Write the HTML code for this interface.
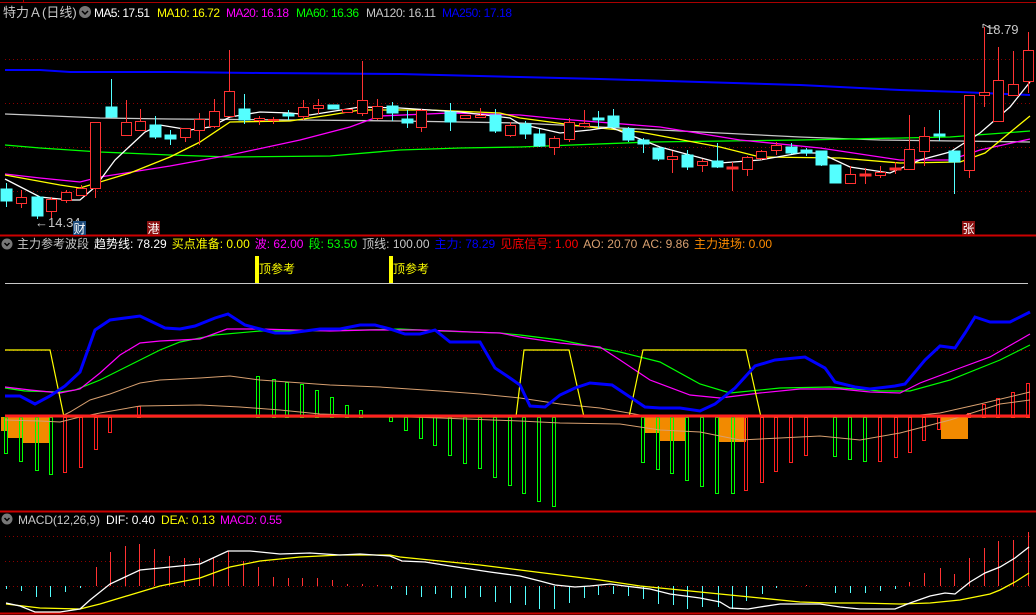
<!DOCTYPE html>
<html><head><meta charset="utf-8"><style>
html,body{margin:0;padding:0;background:#000;width:1036px;height:615px;overflow:hidden}
svg{display:block}
text{font-family:"Liberation Sans","Noto Sans CJK SC",sans-serif;font-size:12px}
.h{font-size:13px}
</style></head><body>
<svg width="1036" height="615" viewBox="0 0 1036 615" xmlns="http://www.w3.org/2000/svg">
<rect width="1036" height="615" fill="#000"/>
<line x1="0" y1="2.5" x2="1036" y2="2.5" stroke="#a00" stroke-width="1"/>
<line x1="23.5" y1="0" x2="23.5" y2="3" stroke="#a00"/>
<line x1="0" y1="235.5" x2="1036" y2="235.5" stroke="#c00" stroke-width="2"/>
<line x1="0" y1="511.5" x2="1036" y2="511.5" stroke="#c00" stroke-width="2"/>
<line x1="0" y1="613.5" x2="1036" y2="613.5" stroke="#c00" stroke-width="2"/>
<g stroke="#8a0000" stroke-dasharray="1,3">
<line x1="5" y1="59.5" x2="1030" y2="59.5"/><line x1="5" y1="103.5" x2="1030" y2="103.5"/>
<line x1="5" y1="147.5" x2="1030" y2="147.5"/><line x1="5" y1="191.5" x2="1030" y2="191.5"/>
<line x1="5" y1="350.5" x2="1030" y2="350.5"/>
<line x1="5" y1="536.5" x2="1030" y2="536.5"/><line x1="5" y1="561.5" x2="1030" y2="561.5"/><line x1="5" y1="586.5" x2="1030" y2="586.5"/>
</g>
<text class="h" x="3" y="17" fill="#c8c8c8">特力Ａ(日线)</text>
<circle cx="85" cy="12" r="6" fill="#777"/><path d="M82 11 L85 14 L88 11" stroke="#000" stroke-width="1.5" fill="none"/>
<text x="94" y="17" fill="#fff" textLength="56">MA5: 17.51</text>
<text x="157" y="17" fill="#ff0" textLength="63">MA10: 16.72</text>
<text x="226" y="17" fill="#f0f" textLength="63">MA20: 16.18</text>
<text x="296" y="17" fill="#0f0" textLength="63">MA60: 16.36</text>
<text x="366" y="17" fill="#c8c8c8" textLength="70">MA120: 16.11</text>
<text x="442" y="17" fill="#00f" textLength="70">MA250: 17.18</text>
<g fill="none" stroke-width="1.3">
<polyline stroke="#0000ff" stroke-width="2" points="5,70 40,70 70,72 170,72 260,73 400,74 520,77 600,79 700,82 800,85 900,90 960,92 1030,95"/>
<polyline stroke="#c8c8c8" points="5,114 30,115 100,118 170,119 300,120 400,121 520,123 600,127 720,133 800,137 880,140 1030,142"/>
<polyline stroke="#00ff00" points="5,145 40,148 100,152 170,155 230,157 330,156 400,150 460,148 520,147 650,142 800,140 950,137 1030,131"/>
<polyline stroke="#ff00ff" points="5,174 40,178 80,182 100,177 170,166 230,155 300,140 350,127 380,116 450,113 520,115 560,119 660,127 740,140 820,148 900,160 950,160 980,150 1030,139"/>
<polyline stroke="#ffff00" points="5,175 60,185 80,188 130,173 170,157 200,142 230,122 290,121 330,115 360,110 430,110 500,113 520,118 580,126 640,132 720,147 760,157 840,158 900,163 960,162 985,153 1030,116"/>
<polyline stroke="#ffffff" points="5,179 40,197 70,200 80,200 95,187 115,160 145,132 160,125 190,130 210,127 230,117 260,112 290,113 310,115 360,107 400,108 460,112 510,118 520,124 560,133 590,130 610,127 660,147 720,163 760,160 800,153 820,153 850,167 890,173 920,160 950,152 980,133 1010,107 1030,82"/>
</g>
<g stroke-width="1">
<g stroke="#54ffff" fill="#54ffff">
<line x1="6.5" y1="183" x2="6.5" y2="207"/><rect x="1" y="189" width="11" height="12"/>
<line x1="37.5" y1="196" x2="37.5" y2="219"/><rect x="32" y="197" width="11" height="19"/>
<line x1="111.5" y1="79" x2="111.5" y2="118"/><rect x="106" y="107" width="11" height="10"/>
<line x1="155.5" y1="116" x2="155.5" y2="139"/><rect x="150" y="125" width="11" height="12"/>
<line x1="170.5" y1="130" x2="170.5" y2="145"/><rect x="165" y="135" width="11" height="4"/>
<line x1="244.5" y1="94" x2="244.5" y2="124"/><rect x="239" y="109" width="11" height="11"/>
<line x1="288.5" y1="110" x2="288.5" y2="120"/><rect x="283" y="114" width="11" height="2"/>
<rect x="328" y="105" width="11" height="4"/>
<line x1="392.5" y1="102" x2="392.5" y2="121"/><rect x="387" y="106" width="11" height="7"/>
<line x1="407.5" y1="110" x2="407.5" y2="128"/><rect x="402" y="119" width="11" height="4"/>
<line x1="450.5" y1="103" x2="450.5" y2="131"/><rect x="445" y="112" width="11" height="10"/>
<line x1="495.5" y1="109" x2="495.5" y2="133"/><rect x="490" y="115" width="11" height="16"/>
<line x1="525.5" y1="121" x2="525.5" y2="139"/><rect x="520" y="124" width="11" height="10"/>
<line x1="539.5" y1="129" x2="539.5" y2="147"/><rect x="534" y="134" width="11" height="12"/>
<line x1="598.5" y1="111" x2="598.5" y2="128"/><rect x="593" y="118" width="11" height="2"/>
<line x1="613.5" y1="109" x2="613.5" y2="128"/><rect x="608" y="116" width="11" height="11"/>
<line x1="628.5" y1="127" x2="628.5" y2="142"/><rect x="623" y="129" width="11" height="11"/>
<line x1="643.5" y1="138" x2="643.5" y2="153"/><rect x="638" y="140" width="11" height="4"/>
<line x1="658.5" y1="148" x2="658.5" y2="161"/><rect x="653" y="148" width="11" height="11"/>
<line x1="687.5" y1="150" x2="687.5" y2="170"/><rect x="682" y="155" width="11" height="12"/>
<line x1="717.5" y1="143" x2="717.5" y2="168"/><rect x="712" y="161" width="11" height="6"/>
<line x1="791.5" y1="143" x2="791.5" y2="154"/><rect x="786" y="147" width="11" height="6"/>
<line x1="806.5" y1="148" x2="806.5" y2="156"/><rect x="801" y="150" width="11" height="3"/>
<line x1="821.5" y1="151" x2="821.5" y2="166"/><rect x="816" y="151" width="11" height="14"/>
<rect x="830" y="165" width="11" height="18"/>
<line x1="939.5" y1="110" x2="939.5" y2="141"/><rect x="934" y="134" width="11" height="2"/>
<line x1="954.5" y1="151" x2="954.5" y2="194"/><rect x="949" y="151" width="11" height="11"/>
</g>
<g stroke="#ff3232" fill="#000">
<line x1="21.5" y1="190" x2="21.5" y2="208"/><rect x="16.5" y="197.5" width="10" height="6"/>
<line x1="51.5" y1="197" x2="51.5" y2="218"/><rect x="46.5" y="199.5" width="10" height="12"/>
<line x1="66.5" y1="190" x2="66.5" y2="203"/><rect x="61.5" y="192.5" width="10" height="8"/>
<line x1="81.5" y1="185" x2="81.5" y2="195"/><rect x="76.5" y="188.5" width="10" height="7"/>
<line x1="95.5" y1="122" x2="95.5" y2="198"/><rect x="90.5" y="122.5" width="10" height="66"/>
<line x1="126.5" y1="100" x2="126.5" y2="135"/><rect x="121.5" y="122.5" width="10" height="13"/>
<line x1="140.5" y1="109" x2="140.5" y2="130"/><rect x="135.5" y="121.5" width="10" height="9"/>
<line x1="185.5" y1="128" x2="185.5" y2="142"/><rect x="180.5" y="128.5" width="10" height="9"/>
<line x1="199.5" y1="113" x2="199.5" y2="145"/><rect x="194.5" y="119.5" width="10" height="11"/>
<line x1="214.5" y1="99" x2="214.5" y2="128"/><rect x="209.5" y="111.5" width="10" height="15"/>
<line x1="229.5" y1="50" x2="229.5" y2="116"/><rect x="224.5" y="91.5" width="10" height="25"/>
<line x1="259.5" y1="116" x2="259.5" y2="125"/><rect x="254.5" y="118.5" width="10" height="2"/>
<line x1="273.5" y1="117" x2="273.5" y2="124"/><rect x="268.5" y="119.5" width="10" height="1"/>
<line x1="303.5" y1="100" x2="303.5" y2="120"/><rect x="298.5" y="107.5" width="10" height="9"/>
<line x1="318.5" y1="99" x2="318.5" y2="114"/><rect x="313.5" y="105.5" width="10" height="3"/>
<rect x="342.5" y="109.5" width="10" height="3"/>
<line x1="362.5" y1="61" x2="362.5" y2="116"/><rect x="357.5" y="100.5" width="10" height="13"/>
<line x1="377.5" y1="99" x2="377.5" y2="120"/><rect x="372.5" y="106.5" width="10" height="12"/>
<line x1="421.5" y1="109" x2="421.5" y2="132"/><rect x="416.5" y="110.5" width="10" height="17"/>
<rect x="460.5" y="115.5" width="10" height="3"/>
<line x1="480.5" y1="108" x2="480.5" y2="118"/><rect x="475.5" y="115.5" width="10" height="2"/>
<line x1="510.5" y1="122" x2="510.5" y2="137"/><rect x="505.5" y="125.5" width="10" height="10"/>
<line x1="554.5" y1="136" x2="554.5" y2="155"/><rect x="549.5" y="138.5" width="10" height="9"/>
<line x1="569.5" y1="118" x2="569.5" y2="142"/><rect x="564.5" y="122.5" width="10" height="17"/>
<line x1="584.5" y1="110" x2="584.5" y2="128"/><rect x="579.5" y="123.5" width="10" height="3"/>
<line x1="672.5" y1="151" x2="672.5" y2="173"/><rect x="667.5" y="156.5" width="10" height="3"/>
<line x1="702.5" y1="159" x2="702.5" y2="172"/><rect x="697.5" y="161.5" width="10" height="4"/>
<line x1="747.5" y1="156" x2="747.5" y2="176"/><rect x="742.5" y="157.5" width="10" height="12"/>
<line x1="761.5" y1="150" x2="761.5" y2="160"/><rect x="756.5" y="151.5" width="10" height="7"/>
<line x1="776.5" y1="142" x2="776.5" y2="155"/><rect x="771.5" y="145.5" width="10" height="5"/>
<line x1="850.5" y1="166" x2="850.5" y2="184"/><rect x="845.5" y="174.5" width="10" height="9"/>
<line x1="880.5" y1="166" x2="880.5" y2="178"/><rect x="875.5" y="172.5" width="10" height="3"/>
<line x1="909.5" y1="115" x2="909.5" y2="165"/><rect x="904.5" y="149.5" width="10" height="20"/>
<line x1="924.5" y1="127" x2="924.5" y2="166"/><rect x="919.5" y="136.5" width="10" height="15"/>
<line x1="969.5" y1="95" x2="969.5" y2="178"/><rect x="964.5" y="95.5" width="10" height="75"/>
<line x1="984.5" y1="27" x2="984.5" y2="107"/><rect x="979.5" y="92.5" width="10" height="3"/>
<line x1="998.5" y1="47" x2="998.5" y2="121"/><rect x="993.5" y="80.5" width="10" height="41"/>
<line x1="1013.5" y1="51" x2="1013.5" y2="95"/><rect x="1008.5" y="84.5" width="10" height="11"/>
<line x1="1028.5" y1="32" x2="1028.5" y2="93"/><rect x="1023.5" y="50.5" width="10" height="31"/>
</g>
<g stroke="#ff3232" fill="#ff3232">
<line x1="732.5" y1="162" x2="732.5" y2="191"/><rect x="727" y="167" width="11" height="2"/>
<line x1="865.5" y1="168" x2="865.5" y2="184"/><rect x="860" y="174" width="11" height="2"/>
<line x1="895.5" y1="162" x2="895.5" y2="174"/><rect x="890" y="168" width="11" height="2"/>
</g>
</g>
<text class="h" x="35" y="227" fill="#c8c8c8">←14.34</text>
<text class="h" x="986" y="34" fill="#c8c8c8">18.79</text>
<path d="M983 24 L983 28 M983 24 L990 28 L996 28" stroke="#c8c8c8" fill="none"/>
<rect x="73" y="221" width="13" height="14" fill="#1c4a7a"/><text x="73.5" y="233" fill="#fff">财</text>
<rect x="147" y="221" width="13" height="14" fill="#8a1010"/><text x="147.5" y="233" fill="#fff">港</text>
<rect x="962" y="221" width="13" height="14" fill="#8a1010"/><text x="962.5" y="233" fill="#fff">张</text>
<circle cx="7" cy="244" r="5.5" fill="#777"/><path d="M4.5 243 L7 245.5 L9.5 243" stroke="#000" stroke-width="1.5" fill="none"/>
<text y="248" x="17"><tspan fill="#c8c8c8">主力参考波段</tspan><tspan fill="#fff" dx="5">趋势线: 78.29</tspan><tspan fill="#ff0" dx="5">买点准备: 0.00</tspan><tspan fill="#f0f" dx="5">波: 62.00</tspan><tspan fill="#0f0" dx="5">段: 53.50</tspan><tspan fill="#c8c8c8" dx="5">顶线: 100.00</tspan><tspan fill="#00f" dx="5">主力: 78.29</tspan><tspan fill="#f00" dx="5">见底信号: 1.00</tspan><tspan fill="#d8a070" dx="5">AO: 20.70</tspan><tspan fill="#d8a070" dx="5">AC: 9.86</tspan><tspan fill="#ff8c00" dx="5">主力进场: 0.00</tspan></text>
<rect x="255" y="256" width="4" height="27" fill="#ff0"/><text x="259" y="273" fill="#ff0">顶参考</text>
<rect x="389" y="256" width="4" height="27" fill="#ff0"/><text x="393" y="273" fill="#ff0">顶参考</text>
<line x1="5" y1="283.5" x2="1028" y2="283.5" stroke="#c8c8c8"/>
<g fill="#f28a00">
<rect x="1" y="417" width="49" height="14"/><rect x="8" y="417" width="42" height="21"/><rect x="23" y="417" width="27" height="26"/>
<rect x="645" y="417" width="41" height="16"/><rect x="659" y="417" width="27" height="24"/>
<rect x="719" y="417" width="27" height="25"/><rect x="941" y="417" width="27" height="22"/>
</g>
<g fill="none" stroke-width="1">
<g stroke="#00ff00">
<rect x="4.5" y="417.5" width="3" height="36"/><rect x="19.5" y="417.5" width="3" height="44"/><rect x="35.5" y="417.5" width="3" height="53"/><rect x="49.5" y="417.5" width="3" height="57"/>
<rect x="256.5" y="376.5" width="3" height="41"/><rect x="272.5" y="379.5" width="3" height="38"/><rect x="285.5" y="382.5" width="3" height="35"/><rect x="300.5" y="384.5" width="3" height="33"/><rect x="315.5" y="390.5" width="3" height="27"/><rect x="330.5" y="397.5" width="3" height="20"/><rect x="345.5" y="405.5" width="3" height="12"/><rect x="359.5" y="410.5" width="3" height="7"/>
<rect x="389.5" y="417.5" width="3" height="4"/><rect x="404.5" y="417.5" width="3" height="13"/><rect x="419.5" y="417.5" width="3" height="21"/><rect x="433.5" y="417.5" width="3" height="28"/><rect x="448.5" y="417.5" width="3" height="38"/><rect x="463.5" y="417.5" width="3" height="46"/><rect x="478.5" y="417.5" width="3" height="51"/><rect x="493.5" y="417.5" width="3" height="60"/><rect x="508.5" y="417.5" width="3" height="68"/><rect x="522.5" y="417.5" width="3" height="76"/><rect x="537.5" y="417.5" width="3" height="84"/><rect x="552.5" y="417.5" width="3" height="89"/>
<rect x="641.5" y="417.5" width="3" height="45"/><rect x="656.5" y="417.5" width="3" height="52"/><rect x="670.5" y="417.5" width="3" height="56"/><rect x="685.5" y="417.5" width="3" height="63"/><rect x="700.5" y="417.5" width="3" height="69"/><rect x="715.5" y="417.5" width="3" height="76"/><rect x="731.5" y="417.5" width="3" height="76"/>
<rect x="833.5" y="417.5" width="3" height="39"/><rect x="848.5" y="417.5" width="3" height="42"/><rect x="863.5" y="417.5" width="3" height="44"/>
</g>
<g stroke="#ff2020">
<rect x="63.5" y="417.5" width="3" height="55"/><rect x="79.5" y="417.5" width="3" height="50"/><rect x="94.5" y="417.5" width="3" height="32"/><rect x="108.5" y="417.5" width="3" height="15"/>
<rect x="137.5" y="406.5" width="3" height="11"/>
<rect x="744.5" y="417.5" width="3" height="73"/><rect x="760.5" y="417.5" width="3" height="65"/><rect x="774.5" y="417.5" width="3" height="54"/><rect x="789.5" y="417.5" width="3" height="45"/><rect x="804.5" y="417.5" width="3" height="38"/>
<rect x="878.5" y="417.5" width="3" height="44"/><rect x="894.5" y="417.5" width="3" height="40"/><rect x="908.5" y="417.5" width="3" height="35"/><rect x="922.5" y="417.5" width="3" height="23"/><rect x="937.5" y="417.5" width="3" height="12"/>
<rect x="967.5" y="413.5" width="3" height="4"/><rect x="982.5" y="404.5" width="3" height="13"/><rect x="996.5" y="398.5" width="3" height="19"/><rect x="1011.5" y="392.5" width="3" height="25"/><rect x="1026.5" y="383.5" width="3" height="34"/>
</g>
</g>
<g fill="none">
<polyline stroke="#d8a070" points="5,417 60,417 70,412 90,400 110,394 140,383 160,380 200,378 230,376 260,380 330,385 380,387 440,391 480,394 520,398 560,404 600,408 640,415 700,417 760,417 820,417 900,417 940,413 980,404 1030,392"/>
<polyline stroke="#d8a070" points="5,420 40,421 60,422 80,417 100,413 140,406 200,405 240,407 280,410 320,414 380,416 440,418 520,421 560,423 620,424 660,430 700,432 740,440 780,438 820,436 860,440 900,433 950,420 1000,404 1030,400"/>
<polyline stroke="#00ff00" stroke-width="1.2" points="5,388 25,391 60,392 75,390 100,380 130,365 160,350 180,342 215,335 260,331 300,331 360,330 400,329 440,331 500,333 520,335 560,340 620,352 660,362 700,384 730,393 780,388 830,387 880,391 910,391 950,380 1000,360 1030,345"/>
<polyline stroke="#ff00ff" stroke-width="1.2" points="5,387 30,390 60,393 80,389 100,373 120,355 140,343 160,341 200,339 227,329 260,329 330,331 370,330 420,330 450,331 470,332 500,333 520,337 560,343 600,347 620,360 650,380 690,395 720,398 760,393 800,389 840,389 870,392 900,393 920,383 960,368 990,357 1030,334"/>
<polyline stroke="#ffff00" stroke-width="1.2" points="5,350 50,350 64,417 516,417 524,350 569,350 584,417 629,417 643,350 746,350 761,417 1030,417"/>
<polyline stroke="#0000ff" stroke-width="3" points="5,396 20,396 35,404 50,396 65,386 80,372 95,330 110,320 125,318 140,316 165,328 180,329 195,326 215,318 228,314 245,325 260,329 275,333 290,333 305,331 320,329 340,329 360,325 375,325 390,329 405,334 420,334 435,330 450,342 465,342 480,342 495,368 510,378 520,385 530,406 545,407 560,395 575,388 590,383 612,385 630,397 645,407 660,408 680,408 700,411 715,404 735,388 755,366 775,360 805,357 825,368 835,382 855,387 870,389 895,386 905,384 925,360 940,346 955,348 965,333 975,317 990,322 1010,322 1030,312"/>
</g>
<line x1="5" y1="416" x2="1030" y2="416" stroke="#ff2020" stroke-width="3"/>
<circle cx="7" cy="519" r="5.5" fill="#777"/><path d="M4.5 518 L7 520.5 L9.5 518" stroke="#000" stroke-width="1.5" fill="none"/>
<text x="18" y="524" fill="#c8c8c8" textLength="82">MACD(12,26,9)</text>
<text x="106" y="524" fill="#fff" textLength="49">DIF: 0.40</text>
<text x="161" y="524" fill="#ff0" textLength="54">DEA: 0.13</text>
<text x="220" y="524" fill="#f0f" textLength="62">MACD: 0.55</text>
<g stroke-width="1">
<g stroke="#54ffff">
<path d="M6.5 586V589M21.5 586V591M36.5 586V597M50.5 586V597M65.5 586V592M80.5 586V588M391.5 586V589M406.5 586V595M421.5 586V597M435.5 586V594M451.5 586V598M465.5 586V598M480.5 586V597M495.5 586V602M510.5 586V603M525.5 586V605M539.5 586V609M554.5 586V609M569.5 586V603M584.5 586V598M598.5 586V595M613.5 586V594M628.5 586V596M643.5 586V599M658.5 586V604M673.5 586V605M687.5 586V609M702.5 586V607M718.5 586V607M732.5 586V609M746.5 586V601M762.5 586V594M776.5 586V588M835.5 586V593M850.5 586V593M865.5 586V593M880.5 586V591M895.5 586V589"/>
</g>
<g stroke="#ff3232">
<path d="M96.5 586V567M110.5 586V552M125.5 586V546M139.5 586V544M154.5 586V549M169.5 586V556M184.5 586V558M199.5 586V558M213.5 586V558M228.5 586V551M243.5 586V561M258.5 586V567M273.5 586V577M288.5 586V578M302.5 586V578M317.5 586V578M332.5 586V580M347.5 586V584M362.5 586V584M377.5 586V585M806.5 586V585M909.5 586V582M924.5 586V573M940.5 586V568M954.5 586V574M969.5 586V558M984.5 586V548M998.5 586V541M1013.5 586V540M1028.5 586V532"/>
</g>
</g>
<g fill="none" stroke-width="1.3">
<polyline stroke="#ffff00" points="6,604 40,608 80,609 100,604 130,595 160,586 200,578 230,567 260,561 300,557 340,555 390,555 400,557 440,561 480,565 520,570 560,575 600,580 640,586 680,590 720,594 760,598 800,602 830,603 860,603 900,604 930,603 960,600 990,594 1000,590 1015,582 1029,573"/>
<polyline stroke="#ffffff" points="6,603 20,606 35,612 60,612 80,609 90,600 110,584 140,570 160,568 180,566 200,564 228,551 250,551 280,554 310,553 340,555 360,554 390,556 402,561 425,562 450,566 490,572 520,576 540,581 555,585 575,587 590,586 610,584 625,586 650,589 670,594 700,598 720,602 730,608 748,609 760,607 780,604 820,604 840,607 860,609 895,609 910,603 930,596 945,593 955,594 970,582 985,573 1000,567 1015,558 1029,547"/>
</g>
</svg>
</body></html>
